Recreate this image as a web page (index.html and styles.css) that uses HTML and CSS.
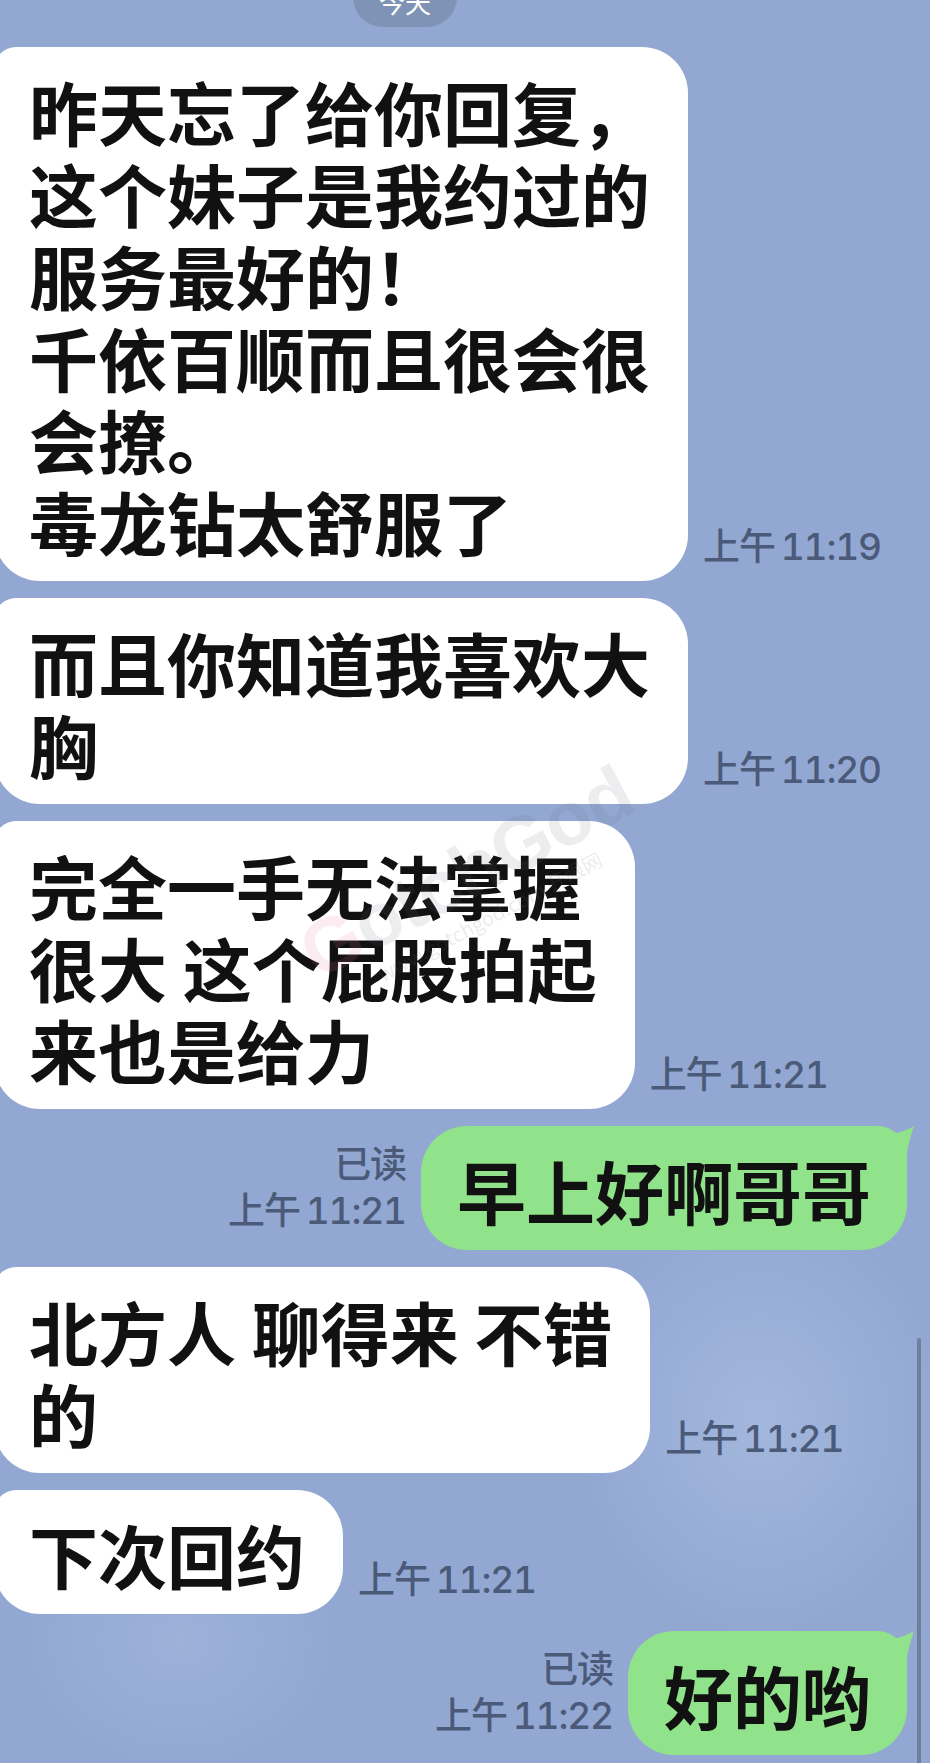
FILE: index.html
```html
<!DOCTYPE html>
<html lang="zh-CN">
<head>
<meta charset="utf-8">
<title>聊天</title>
<link rel="stylesheet" href="styles.css">
</head>
<body>
<div class="screen">
  <div class="date">今天</div>

  <div class="row in first">
    <div class="bubble white">昨天忘了给你回复，<br>这个妹子是我约过的<br>服务最好的！<br>千依百顺而且很会很<br>会撩。<br>毒龙钻太舒服了</div>
    <div class="time">上午 11:19</div>
  </div>

  <div class="row in">
    <div class="bubble white">而且你知道我喜欢大<br>胸</div>
    <div class="time">上午 11:20</div>
  </div>

  <div class="row in">
    <div class="bubble white">完全一手无法掌握<br>很大 这个屁股拍起<br>来也是给力</div>
    <div class="time">上午 11:21</div>
  </div>

  <div class="row out">
    <div class="meta"><span>已读</span><span>上午 11:21</span></div>
    <div class="bubble green">早上好啊哥哥<svg class="tail" viewBox="0 0 40 44" width="40" height="44"><path d="M0 9 C14 10 27 7 39 0 C35 12 31 25 30 44 L0 44 Z" fill="#90e28b"/></svg></div>
  </div>

  <div class="row in">
    <div class="bubble white">北方人 聊得来 不错<br>的</div>
    <div class="time">上午 11:21</div>
  </div>

  <div class="row in">
    <div class="bubble white">下次回约</div>
    <div class="time">上午 11:21</div>
  </div>

  <div class="row out">
    <div class="meta"><span>已读</span><span>上午 11:22</span></div>
    <div class="bubble green">好的哟<svg class="tail" viewBox="0 0 40 44" width="40" height="44"><path d="M0 9 C14 10 27 7 39 0 C35 12 31 25 30 44 L0 44 Z" fill="#90e28b"/></svg></div>
  </div>

  <div class="watermark">
    <span class="wm-big"><span class="wm-g">G</span>otchGod</span>
    <span class="wm-small">www.gotchgod.com 开眼网</span>
  </div>
  <div class="scrollbar"></div>
</div>
</body>
</html>
```

FILE: styles.css
```css
html, body {
  margin: 0;
  padding: 0;
}

body {
  font-family: "Noto Sans CJK SC", "Noto Sans", sans-serif;
  background: #93a9d4;
}

.screen {
  position: relative;
  width: 930px;
  height: 1763px;
  overflow: hidden;
  background:
    radial-gradient(ellipse 260px 300px at 760px 1420px, rgba(178, 196, 228, 0.55), rgba(178, 196, 228, 0) 70%),
    radial-gradient(ellipse 220px 180px at 180px 1640px, rgba(170, 188, 224, 0.45), rgba(170, 188, 224, 0) 70%),
    #92a8d3;
}

.date {
  margin: -33px 0 0 353px;
  width: 104px;
  height: 60px;
  box-sizing: border-box;
  padding-top: 22px;
  border-radius: 30px;
  background: #7f93b7;
  color: #ffffff;
  font-size: 26px;
  line-height: 26px;
  text-align: center;
}

.row {
  display: flex;
  align-items: flex-end;
  margin-top: 17px;
}

.row.first {
  margin-top: 20px;
}

.row.in {
  justify-content: flex-start;
}

.row.out {
  justify-content: flex-end;
  padding-right: 23px;
}

.bubble {
  position: relative;
  box-sizing: border-box;
  padding: 23px 38px 19px 35px;
  font-size: 69px;
  line-height: 82px;
  font-weight: 700;
  color: #111111;
  white-space: nowrap;
  border-radius: 46px;
}

.bubble.white {
  margin-left: -6px;
  background: #ffffff;
  border-top-left-radius: 22px;
}

.bubble.green {
  background: #90e28b;
  padding-left: 36px;
  padding-right: 36px;
  border-top-right-radius: 30px;
}

.tail {
  position: absolute;
  top: 0;
  right: -8px;
  display: block;
}

.time {
  margin: 0 0 16px 15px;
  font-family: Inter, "Noto Sans CJK SC", sans-serif;
  font-weight: 500;
  font-size: 37px;
  line-height: 37px;
  font-variant-numeric: tabular-nums;
  word-spacing: -3px;
  letter-spacing: -1.1px;
  color: #4b5a79;
  white-space: nowrap;
}

.meta {
  display: flex;
  flex-direction: column;
  align-items: flex-end;
  margin: 0 15px 16px 0;
  font-family: Inter, "Noto Sans CJK SC", sans-serif;
  font-weight: 500;
  font-size: 37px;
  line-height: 46px;
  font-variant-numeric: tabular-nums;
  word-spacing: -3px;
  letter-spacing: -1.1px;
  color: #4b5a79;
  white-space: nowrap;
}

.watermark {
  position: absolute;
  left: 292px;
  top: 833px;
  width: 360px;
  display: flex;
  flex-direction: column;
  align-items: center;
  transform: rotate(-28deg);
  transform-origin: center;
  pointer-events: none;
}

.wm-big {
  font-family: "Liberation Sans", Arial, sans-serif;
  font-weight: 700;
  font-size: 76px;
  line-height: 76px;
  color: rgba(110, 110, 120, 0.12);
  letter-spacing: -1px;
}

.wm-g {
  color: rgba(220, 120, 150, 0.14);
}

.wm-small {
  font-size: 20px;
  line-height: 24px;
  color: rgba(110, 110, 120, 0.15);
}

.scrollbar {
  position: absolute;
  left: 917px;
  top: 1338px;
  width: 4px;
  height: 440px;
  border-radius: 2px;
  background: #6e7e9d;
}
```
